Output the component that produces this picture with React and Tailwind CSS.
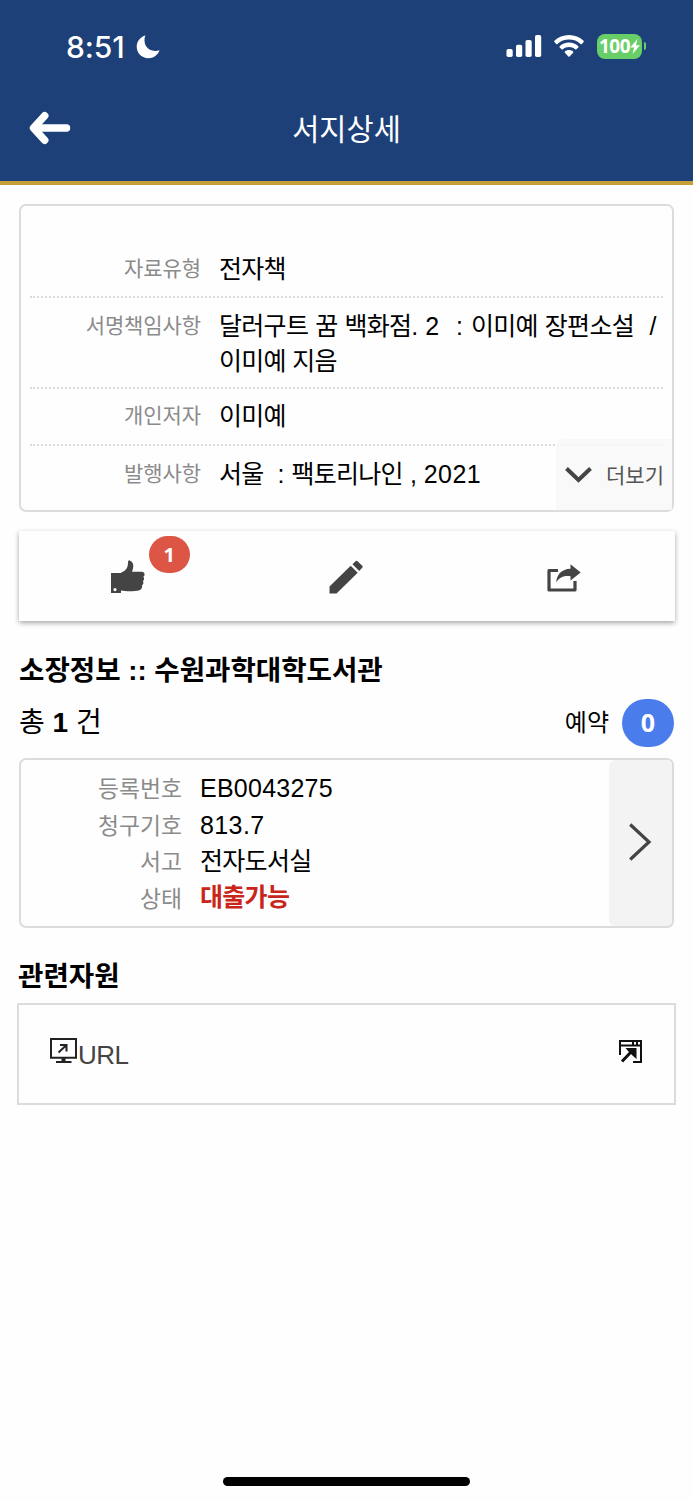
import React from "react";

const FONT = "font-['Liberation_Sans','Noto_Sans_CJK_KR',sans-serif]";

function StatusBar() {
  return (
    <div className="flex h-[92px] items-center justify-between pl-[66px] pr-[47px]">
      <div className="flex items-center gap-[7px]">
        <span className="w-[63px] pt-px font-['Inter',sans-serif] text-[30px] leading-[36px] font-medium tracking-[-0.100px] whitespace-nowrap text-white">8:51</span>
        <svg className="mt-px h-6 w-6" viewBox="0 0 24 24" fill="#fff">
          <path d="M9 .5C4.200 2.200.7 6.500.7 11.800.7 18.300 6 23.300 12.300 23.300c5.200 0 9.700-3.400 11.200-8-6.800 2.300-15-1.500-15-9.800 0-2 .3-3.500.9-5Z" />
        </svg>
      </div>
      <div className="flex items-center">
        <svg className="h-6 w-[36px]" viewBox="0 0 36 24" fill="#fff">
          <rect x="0.500" y="15" width="6.200" height="8" rx="1.800" />
          <rect x="10" y="10.700" width="6.200" height="12.300" rx="1.800" />
          <rect x="19.500" y="6" width="6.200" height="17" rx="1.800" />
          <rect x="29" y="1" width="6.200" height="22" rx="1.800" />
        </svg>
        <svg className="ml-[12px] h-6 w-[30px]" viewBox="0 0 30 24" fill="#fff">
          <path d="M15 1C9.400 1 4.200 3.200.4 6.800c-.4.400-.4.900 0 1.300l1.800 1.800c.4.400.9.400 1.300 0C6.600 7 10.600 5.500 15 5.500S23.400 7 26.500 9.900c.4.400.9.400 1.300 0l1.800-1.800c.4-.4.400-.9 0-1.300C25.800 3.200 20.600 1 15 1Z" />
          <path d="M15 8.600c-3.500 0-6.800 1.300-9.300 3.600-.4.400-.4.900 0 1.300l1.900 1.800c.4.400.9.400 1.300 0 1.600-1.500 3.800-2.300 6.100-2.300s4.500.8 6.100 2.300c.4.400.9.400 1.300 0l1.900-1.800c.4-.4.400-.9 0-1.300-2.500-2.300-5.800-3.600-9.300-3.600Z" />
          <path d="M15 16.100c-1.600 0-3 .5-4.100 1.500-.4.400-.4.800 0 1.200l3.500 3.700c.4.400.8.400 1.200 0l3.500-3.700c.4-.4.400-.8 0-1.200-1.100-1-2.500-1.500-4.100-1.500Z" />
        </svg>
        <div className="ml-[13px] flex h-[25px] w-[45px] items-center rounded-[8px] bg-[#68ce67] pl-[2px]">
          <span className="font-['Noto_Sans',sans-serif] text-[19px] leading-[25px] font-bold tracking-[-0.500px] text-white">100</span>
          <svg className="h-[15px] w-[10px] shrink-0" viewBox="0 0 10 15" fill="#fff">
            <path d="M7.500 0 .2 8.500h4L2.500 15 10 6.200H6Z" />
          </svg>
        </div>
        <div className="ml-[1.500px] h-[8px] w-[2.500px] rounded-r-full bg-[#68ce67]" />
      </div>
    </div>
  );
}

function Ko({ children, className = "" }) {
  return <span className={`tracking-[-0.7px] ${className}`}>{children}</span>;
}

function DetailRow({ label, className, children }) {
  return (
    <div className={`flex ${className}`}>
      <div className="w-[171px] shrink-0 text-right text-[21px] leading-[35px] tracking-[-0.100px] text-[#8b8b8b]">{label}</div>
      <div className="ml-[18px] pt-px text-[25px] leading-[35px] whitespace-pre text-black">{children}</div>
    </div>
  );
}

function HoldingRow({ label, children }) {
  return (
    <div className="flex h-[36.500px] items-center">
      <div className="w-[161px] shrink-0 pt-[2px] text-right text-[22.800px] leading-9 text-[#8b8b8b]">{label}</div>
      <div className="ml-[18px] text-[25px] leading-9 text-black">{children}</div>
    </div>
  );
}

const divider = "border-b-2 border-dotted border-[#dcdcdc]";

export default function App() {
  return (
    <div className={`relative flex h-[1500px] w-[693px] flex-col overflow-hidden bg-[#fefefe] ${FONT}`}>
      <header className="h-[185px] shrink-0 border-b-4 border-[#c79f38] bg-[#1d4078]">
        <StatusBar />
        <div className="grid h-[72px] grid-cols-[1fr_auto_1fr] items-center">
          <svg className="ml-[29px] h-[34px] w-[42px]" viewBox="0 0 42 34" fill="none" stroke="#fff" strokeWidth="7.500" strokeLinecap="round" strokeLinejoin="round">
            <path d="M15.700 4.700 4.500 17l11.200 12.300M6 17h31.500" />
          </svg>
          <h1 className="pt-[4px] text-[29.500px] leading-[40px] text-white">서지상세</h1>
        </div>
      </header>

      <section className="relative mx-[19px] mt-[19px] h-[308px] shrink-0 rounded-[7px] border-2 border-[#dcdcdc] px-[9px] pt-[34px]">
        <DetailRow label="자료유형" className={`h-[58px] pt-[10.500px] ${divider}`}><Ko>전자책</Ko></DetailRow>
        <DetailRow label="서명책임사항" className={`h-[91px] pt-[10px] ${divider}`}>
          <Ko>달러구트</Ko> <Ko>꿈</Ko> <Ko>백화점</Ko>. <span className="tracking-[1px]">2{"  "}:</span> <Ko>이미예</Ko> <Ko>장편소설</Ko><span className="tracking-[0.800px]">{"  "}/</span><br /><Ko>이미예 지음</Ko>
        </DetailRow>
        <DetailRow label="개인저자" className={`h-[57px] pt-[9px] ${divider}`}><Ko>이미예</Ko></DetailRow>
        <DetailRow label="발행사항" className="h-[57px] pt-[10px]">
          <Ko>서울</Ko>{"  "}: <Ko>팩토리나인</Ko> , <span className="tracking-[0.400px]">2021</span>
        </DetailRow>
        <button className="absolute right-0 bottom-0 flex h-[71px] w-[116px] items-center rounded-tl-[6px] bg-[#f8f8f8]/85 pl-[9px]">
          <svg className="h-[16px] w-[27px]" viewBox="0 0 27 16" fill="none" stroke="#444" strokeWidth="4">
            <path d="M1.500 1.500 13.500 13l12-11.500" />
          </svg>
          <span className="ml-[14px] pt-[3px] text-[21px] leading-[30px] text-[#555]">더보기</span>
        </button>
      </section>

      <nav className="mr-[18.500px] ml-[18.500px] mt-[19px] grid h-[90px] shrink-0 grid-cols-3 items-center justify-items-center bg-[#fefefe] shadow-[0_2px_5px_rgba(0,0,0,0.35)]">
        <button className="relative mt-[2px]">
          <svg className="h-[34px] w-[36px]" viewBox="0 0 36 34" fill="#444">
            <path fillRule="evenodd" d="M1 13h10.500v-.8C15 11.500 18 8 18 3c0-2 .6-3 1.700-2.500 4 1.500 4.500 6 2.300 11.200h9.500c2 0 3.300 1.300 3 3 0 1-.6 1.500-1.200 2 1.200 1.300 1 3.300-.4 4.300 1 1.400.6 3.400-.9 4.200.6 2-.5 4.300-2.600 5-5.500 1.600-13.500 1.200-18.400.4V33H1ZM5 28a1.600 1.600 0 1 0 0 3.200 1.600 1.600 0 0 0 0-3.200Z" />
          </svg>
          <span className="absolute -top-[24px] left-[39px] flex h-[37px] w-[41px] items-center justify-center rounded-full bg-[#dc5545] font-['Noto_Sans',sans-serif] text-[20px] font-bold text-white">1</span>
        </button>
        <svg className="mt-[2px] h-[34px] w-[34px]" viewBox="0 0 34 34" fill="#444">
          <path d="M.5 33.500v-7L21.700 5.800l7 7L7.500 33.500ZM23.500 4.200l3-3q1-1 2.100 0l4.600 4.500q1 1 0 2.100l-3 3.200Z" />
        </svg>
        <svg className="mt-[3px] mr-[3px] h-[28px] w-[34px]" viewBox="0 0 34 28" fill="none">
          <path d="M11 6.500H2v19.500h26v-9" stroke="#444" strokeWidth="3.200" strokeLinejoin="round" />
          <path d="M23.500.3 33.700 8.500 23.500 16.500V12.200C17.500 11.500 12.500 13 9.200 18.500 9.500 11 14.500 5 23.500 4.800Z" fill="#444" />
        </svg>
      </nav>

      <h2 className="mx-[19px] mt-[30px] h-[40px] shrink-0 text-[27.600px] leading-[40px] font-bold text-black">소장정보 :: 수원과학대학도서관</h2>
      <div className="mx-[19px] mt-[8px] flex h-[48px] shrink-0 items-center justify-between">
        <p className="text-[28px] leading-[40px] text-black">총 <b>1</b> 건</p>
        <div className="flex items-center gap-[13px]">
          <span className="text-[24px] leading-[36px] text-black">예약</span>
          <span className="flex h-[48px] w-[52px] items-center justify-center rounded-full bg-[#4b7cec] font-['Noto_Sans',sans-serif] text-[25px] font-bold text-white">0</span>
        </div>
      </div>

      <section className="mx-[19px] mt-[11px] flex h-[170px] shrink-0 justify-between rounded-[7px] border-2 border-[#dcdcdc]">
        <div className="pt-[10px]">
          <HoldingRow label="등록번호"><span className="tracking-[0.250px]">EB0043275</span></HoldingRow>
          <HoldingRow label="청구기호"><span className="tracking-[0.400px]">813.7</span></HoldingRow>
          <HoldingRow label="서고"><Ko>전자도서실</Ko></HoldingRow>
          <HoldingRow label="상태"><Ko className="relative -top-px font-bold text-[#c9251a]">대출가능</Ko></HoldingRow>
        </div>
        <button className="flex w-[63px] items-center rounded-[6px] bg-[#f3f3f3] pl-[20px]">
          <svg className="mb-[3px] h-[38px] w-[23px]" viewBox="0 0 23 38" fill="none" stroke="#444" strokeWidth="3.200">
            <path d="M1.200 1.500 20 19 1.200 36.500" />
          </svg>
        </button>
      </section>

      <h2 className="mx-[18px] mt-[29px] h-[40px] shrink-0 text-[27.600px] leading-[40px] font-bold text-black">관련자원</h2>
      <a className="mx-[17px] mt-[6px] flex h-[102px] shrink-0 items-center justify-between border-2 border-[#dcdcdc] pr-[32px] pl-[31px]">
        <span className="flex items-center">
          <svg className="mb-[6px] h-[26px] w-[27px]" viewBox="0 0 27 26" fill="none" stroke="#222" strokeWidth="2">
            <path d="M1 1h25v18.700H1ZM6 24h15.500" />
            <path d="M13.500 20v4" strokeWidth="4" />
            <path d="M8.500 14.500 16 7.500M10 7h6.500v6.500" />
          </svg>
          <span className="ml-px pt-[2px] text-[26px] leading-[36px] tracking-[-0.500px] text-[#444]">URL</span>
        </span>
        <svg className="mb-[6px] h-[23px] w-[23px]" viewBox="0 0 23 23" fill="none" stroke="#111" strokeWidth="2">
          <path d="M1 15V1h21v21h-8M1 5.500h21M14 1v4M18 1v4" />
          <path d="M3 21.500 12 12" strokeWidth="3" />
          <path d="M6.500 8h11v11l-4-3.500-4-4Z" fill="#111" stroke="none" />
        </svg>
      </a>

      <div className="mt-auto mb-[14px] h-[9px] w-[247px] shrink-0 self-center rounded-full bg-black" />
    </div>
  );
}
